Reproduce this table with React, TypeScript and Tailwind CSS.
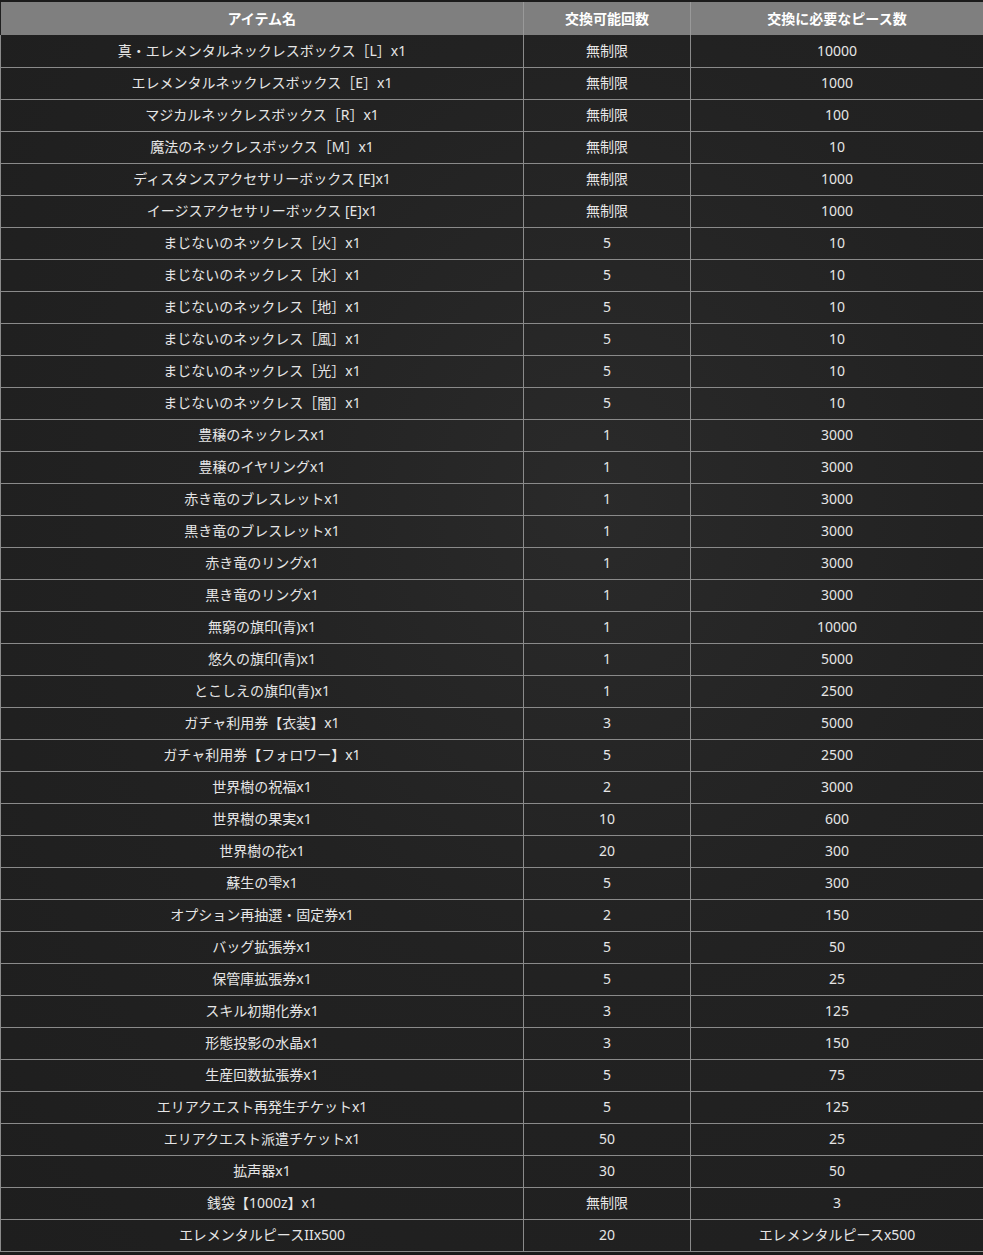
import React from 'react';

type Row = [string, string, string];

const rows: Row[] = [
  ['真・エレメンタルネックレスボックス［L］x1', '無制限', '10000'],
  ['エレメンタルネックレスボックス［E］x1', '無制限', '1000'],
  ['マジカルネックレスボックス［R］x1', '無制限', '100'],
  ['魔法のネックレスボックス［M］x1', '無制限', '10'],
  ['ディスタンスアクセサリーボックス [E]x1', '無制限', '1000'],
  ['イージスアクセサリーボックス [E]x1', '無制限', '1000'],
  ['まじないのネックレス［火］x1', '5', '10'],
  ['まじないのネックレス［水］x1', '5', '10'],
  ['まじないのネックレス［地］x1', '5', '10'],
  ['まじないのネックレス［風］x1', '5', '10'],
  ['まじないのネックレス［光］x1', '5', '10'],
  ['まじないのネックレス［闇］x1', '5', '10'],
  ['豊穣のネックレスx1', '1', '3000'],
  ['豊穣のイヤリングx1', '1', '3000'],
  ['赤き竜のブレスレットx1', '1', '3000'],
  ['黒き竜のブレスレットx1', '1', '3000'],
  ['赤き竜のリングx1', '1', '3000'],
  ['黒き竜のリングx1', '1', '3000'],
  ['無窮の旗印(青)x1', '1', '10000'],
  ['悠久の旗印(青)x1', '1', '5000'],
  ['とこしえの旗印(青)x1', '1', '2500'],
  ['ガチャ利用券【衣装】x1', '3', '5000'],
  ['ガチャ利用券【フォロワー】x1', '5', '2500'],
  ['世界樹の祝福x1', '2', '3000'],
  ['世界樹の果実x1', '10', '600'],
  ['世界樹の花x1', '20', '300'],
  ['蘇生の雫x1', '5', '300'],
  ['オプション再抽選・固定券x1', '2', '150'],
  ['バッグ拡張券x1', '5', '50'],
  ['保管庫拡張券x1', '5', '25'],
  ['スキル初期化券x1', '3', '125'],
  ['形態投影の水晶x1', '3', '150'],
  ['生産回数拡張券x1', '5', '75'],
  ['エリアクエスト再発生チケットx1', '5', '125'],
  ['エリアクエスト派遣チケットx1', '50', '25'],
  ['拡声器x1', '30', '50'],
  ['銭袋【1000z】x1', '無制限', '3'],
  ['エレメンタルピースIIx500', '20', 'エレメンタルピースx500'],
];

const App = () => {
  return (
    <div
      className="min-h-[1255px] w-full bg-[#1b1b1b] pt-[2px] text-[14px] leading-none"
      style={{ fontFamily: '"Noto Sans", "Noto Sans CJK JP", sans-serif' }}
    >
      <div className="bg-[radial-gradient(ellipse_at_60%_40%,#2a2a2a_0%,#222222_45%,#1e1e1e_100%)]">
        <table className="w-full border-collapse table-fixed">
          <colgroup>
            <col className="w-[523px]" />
            <col className="w-[167px]" />
            <col />
          </colgroup>
          <thead>
            <tr className="h-[33px] bg-[#7f7f7f] text-white font-bold">
              <th className="border-r border-[#999] font-bold">アイテム名</th>
              <th className="border-r border-[#999] font-bold">交換可能回数</th>
              <th className="font-bold">交換に必要なピース数</th>
            </tr>
          </thead>
          <tbody className="text-[#e6e6e6]">
            {rows.map((r, i) => (
              <tr key={i} className="h-[32px] border-b border-[#8a8a8a]">
                <td className="border-l border-r border-[#8a8a8a] text-center">{r[0]}</td>
                <td className="border-r border-[#8a8a8a] text-center">{r[1]}</td>
                <td className="text-center">{r[2]}</td>
              </tr>
            ))}
          </tbody>
        </table>
      </div>
    </div>
  );
};

export default App;
